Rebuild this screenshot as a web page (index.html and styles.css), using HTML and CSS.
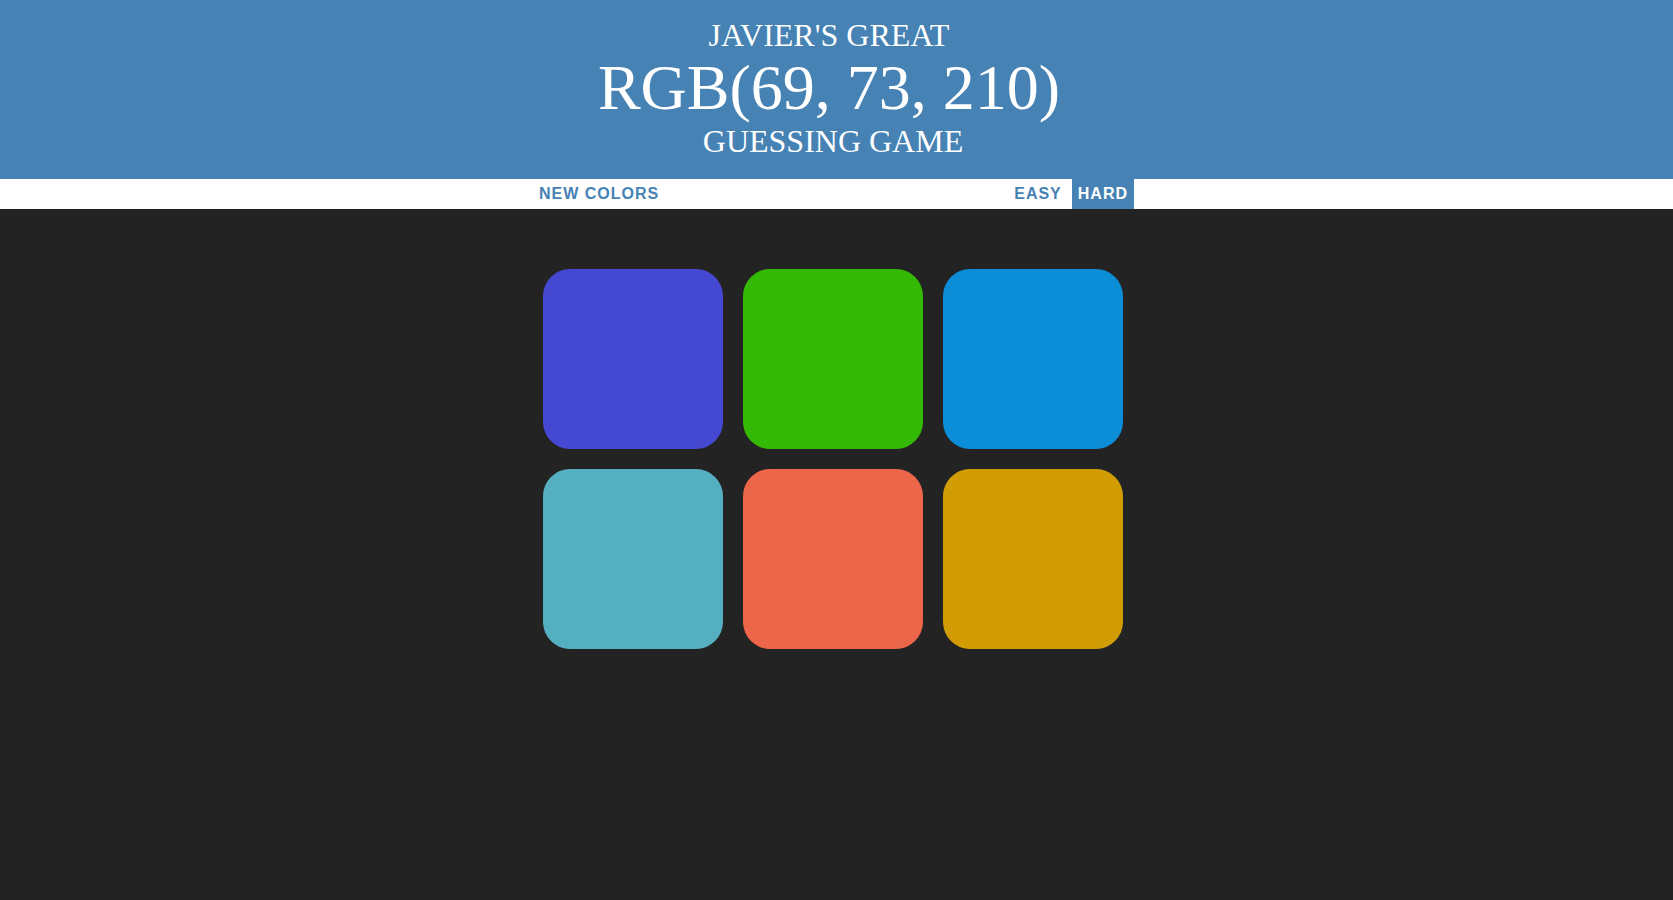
FILE: index.html
```html
<!DOCTYPE html>
<html lang="en">
<head>
<meta charset="utf-8">
<title>Color Game</title>
<link rel="stylesheet" href="styles.css">
</head>
<body>
  <header class="header">
    <h1 class="title">
      <span class="title-line title-line--shifted">Javier's great</span>
      <span class="title-line title-line--shifted color-display">RGB(69, 73, 210)</span>
      <span class="title-line">Guessing game</span>
    </h1>
  </header>
  <nav class="stripe">
    <div class="stripe-inner">
      <button class="btn">New Colors</button>
      <div class="modes">
        <button class="btn">Easy</button>
        <button class="btn selected">Hard</button>
      </div>
    </div>
  </nav>
  <main class="board">
    <div class="grid">
      <div class="square sq-1"></div>
      <div class="square sq-2"></div>
      <div class="square sq-3"></div>
      <div class="square sq-4"></div>
      <div class="square sq-5"></div>
      <div class="square sq-6"></div>
    </div>
  </main>
</body>
</html>
```

FILE: styles.css
```css
* { box-sizing: border-box; }

html, body {
  margin: 0;
  padding: 0;
}

body {
  background: #232323;
  font-family: "Liberation Sans", Arial, sans-serif;
  min-height: 100vh;
}

.header {
  background: #4682b4;
  padding: 18px 7px 20px 0;
}

.title {
  margin: 0;
  font-family: "Liberation Serif", "Times New Roman", serif;
  font-weight: normal;
  font-size: 32px;
  line-height: 1.1;
  color: #fff;
  text-transform: uppercase;
  text-align: center;
}

.title-line {
  display: block;
}

.title-line--shifted {
  padding-right: 8px;
}

.color-display {
  font-size: 64px;
  line-height: 70.4px;
}

.stripe {
  background: #fff;
  height: 30px;
  padding-right: 7px;
}

.stripe-inner {
  width: 600px;
  height: 100%;
  margin: 0 auto;
  display: flex;
  justify-content: space-between;
}

.modes {
  display: flex;
  gap: 4px;
  height: 100%;
  margin-right: -1px;
}

.btn {
  border: none;
  background: none;
  height: 100%;
  padding: 0 6px;
  margin: 0;
  font-family: "Liberation Sans", Arial, sans-serif;
  font-size: 16px;
  font-weight: 700;
  letter-spacing: 1px;
  text-transform: uppercase;
  color: #4682b4;
  cursor: pointer;
}

.btn.selected {
  background: #4682b4;
  color: #fff;
}

.board {
  padding-right: 7px;
}

.grid {
  width: 580px;
  margin: 60px auto 0;
  display: grid;
  grid-template-columns: repeat(3, 180px);
  gap: 20px;
}

.square {
  width: 180px;
  height: 180px;
  border-radius: 27px;
}

.sq-1 { background: rgb(69, 73, 210); }
.sq-2 { background: rgb(52, 186, 4); }
.sq-3 { background: rgb(12, 141, 216); }
.sq-4 { background: rgb(84, 175, 193); }
.sq-5 { background: rgb(236, 102, 74); }
.sq-6 { background: rgb(210, 156, 4); }
```
